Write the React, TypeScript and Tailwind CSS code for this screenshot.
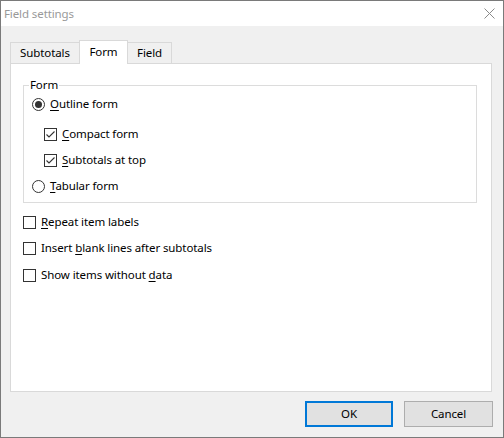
import React from "react";

type Tab = { label: string; width: string; active?: boolean };

const tabs: Tab[] = [
  { label: "Subtotals", width: "w-[70px]" },
  { label: "Form", width: "w-[49px]", active: true },
  { label: "Field", width: "w-[45px]" },
];

function CheckBox({ checked }: { checked?: boolean }) {
  return (
    <span className="flex h-[13px] w-[13px] shrink-0 items-center justify-center border border-[#333333] bg-white">
      {checked && (
        <svg width="11" height="11" viewBox="0 0 11 11" fill="none">
          <path d="M1.5 5.5 L4 8 L9.5 2.5" stroke="#333333" strokeWidth="1.1" />
        </svg>
      )}
    </span>
  );
}

function Radio({ checked }: { checked?: boolean }) {
  return (
    <span className="flex h-[13px] w-[13px] shrink-0 items-center justify-center rounded-full border border-[#333333] bg-white">
      {checked && <span className="h-[7px] w-[7px] rounded-full bg-[#333333]" />}
    </span>
  );
}

// label with underlined access key
function Label({ pre = "", k, post }: { pre?: string; k: string; post: string }) {
  return (
    <span className="leading-[20px] whitespace-nowrap">
      {pre}
      <u className="underline-offset-2">{k}</u>
      {post}
    </span>
  );
}

export default function App() {
  return (
    <div className="flex h-[438px] w-[504px] flex-col border border-[#7a7a7a] bg-[#f0f0f0] font-['Noto_Sans',sans-serif] text-[11.5px] tracking-[-0.1px] text-black">
      {/* title bar */}
      <div className="flex h-[25px] shrink-0 items-center justify-between bg-white pl-[3px] pr-[8px] text-[#999999]">
        <span>Field settings</span>
        <svg width="11" height="11" viewBox="0 0 11 11">
          <path d="M0.5 0.5 L10.5 10.5 M10.5 0.5 L0.5 10.5" stroke="#8a8a8a" strokeWidth="1" />
        </svg>
      </div>

      <div className="flex flex-1 flex-col pb-[10px] pl-[9px] pr-[11px] pt-[14px]">
        {/* tabs */}
        <div className="flex h-[23px] items-end">
          {tabs.map((t, i) => (
            <div
              key={t.label}
              className={[
                "flex items-center justify-center border-x border-t border-[#d9d9d9]",
                t.width,
                i > 0 ? "-ml-px" : "",
                t.active
                  ? "relative z-10 -mb-px h-[24px] bg-white pb-[2px]"
                  : "h-[21px] bg-[#f0f0f0]",
              ].join(" ")}
            >
              {t.label}
            </div>
          ))}
        </div>

        {/* panel */}
        <div className="flex flex-1 flex-col border border-[#d9d9d9] bg-white pl-[12px] pr-[14px] pt-[21px]">
          <div className="relative border border-[#dcdcdc] pb-[6px] pl-[8px] pt-[8px]">
            <span className="absolute left-[5px] top-[-9px] bg-white px-[1px] leading-[16px]">Form</span>
            <div className="flex h-[20px] items-center gap-[5px]">
              <Radio checked />
              <Label k="O" post="utline form" />
            </div>
            <div className="mt-[10px] flex h-[20px] items-center gap-[5px] pl-[12px]">
              <CheckBox checked />
              <Label k="C" post="ompact form" />
            </div>
            <div className="mt-[6px] flex h-[20px] items-center gap-[5px] pl-[12px]">
              <CheckBox checked />
              <Label k="S" post="ubtotals at top" />
            </div>
            <div className="mt-[6px] flex h-[20px] items-center gap-[5px]">
              <Radio />
              <Label k="T" post="abular form" />
            </div>
          </div>

          <div className="mt-[9px] flex h-[20px] items-center gap-[5px]">
            <CheckBox />
            <Label k="R" post="epeat item labels" />
          </div>
          <div className="mt-[6px] flex h-[20px] items-center gap-[5px]">
            <CheckBox />
            <Label pre="Insert " k="b" post="lank lines after subtotals" />
          </div>
          <div className="mt-[7px] flex h-[20px] items-center gap-[5px]">
            <CheckBox />
            <Label pre="Show items without " k="d" post="ata" />
          </div>
        </div>

        {/* buttons */}
        <div className="-mr-px mt-[9px] flex justify-end gap-[11px]">
          <button className="h-[26px] w-[88px] border-2 border-[#0078d7] bg-[#e1e1e1]">OK</button>
          <button className="h-[26px] w-[89px] border border-[#adadad] bg-[#e1e1e1]">Cancel</button>
        </div>
      </div>
    </div>
  );
}
